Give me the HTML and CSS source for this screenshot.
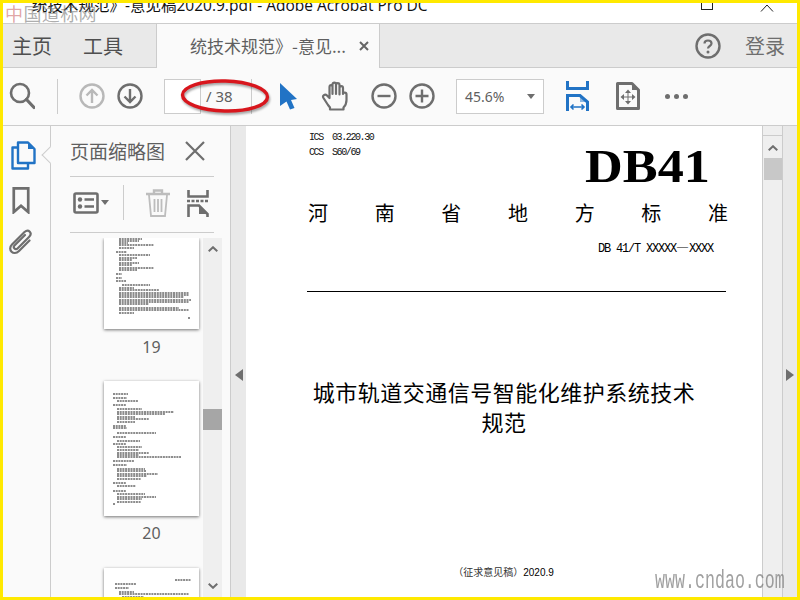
FILE: index.html
```html
<!DOCTYPE html>
<html lang="zh">
<head>
<meta charset="utf-8">
<title>Adobe Acrobat Pro DC</title>
<link rel="stylesheet" href="styles.css">
</head>
<body>
<div class="frame">
  <header class="titlebar">
    <span class="title-text">统技术规范》-意见稿2020.9.pdf - Adobe Acrobat Pro DC</span>
    <span class="win-max"></span>
    <svg class="win-up" width="14" height="8" viewBox="0 0 14 8"><path d="M1 7.500 L7 1 L13 7.500" fill="none" stroke="#222" stroke-width="1"/></svg>
  </header>
  <nav class="tabbar">
    <span class="nav-item first">主页</span>
    <span class="nav-item">工具</span>
    <div class="doc-tab">
      <span class="doc-tab-text">统技术规范》-意见...</span>
      <svg width="10" height="10" viewBox="0 0 10 10"><path d="M1 1 L9 9 M9 1 L1 9" stroke="#666" stroke-width="2"/></svg>
    </div>
    <div class="tab-right">
      <svg width="26" height="26" viewBox="0 0 26 26"><circle cx="13" cy="13" r="11.500" fill="none" stroke="#6e6e6e" stroke-width="2.400"/><path d="M9.500 10.500 C9.500 6.500 16.500 6.500 16.500 10.500 C16.500 13 13 13 13 15.500" fill="none" stroke="#6e6e6e" stroke-width="2.200"/><circle cx="13" cy="19" r="1.500" fill="#6e6e6e"/></svg>
      <span class="login">登录</span>
    </div>
  </nav>
  <div class="toolbar">
    <svg class="ic-search" width="26" height="28" viewBox="0 0 26 28"><circle cx="11" cy="11" r="9" fill="none" stroke="#6e6e6e" stroke-width="2.600"/><path d="M17.500 17.500 L25 25.500" stroke="#6e6e6e" stroke-width="3.200" stroke-linecap="round"/></svg>
    <span class="tool-div first-div"></span>
    <svg class="ic-up" width="26" height="26" viewBox="0 0 26 26"><circle cx="13" cy="13" r="11.500" fill="none" stroke="#b8b8b8" stroke-width="2.400"/><path d="M13 20 V7 M7.500 12.500 L13 7 L18.500 12.500" fill="none" stroke="#b8b8b8" stroke-width="2.400"/></svg>
    <svg class="ic-down" width="26" height="26" viewBox="0 0 26 26"><circle cx="13" cy="13" r="11.500" fill="none" stroke="#6e6e6e" stroke-width="2.400"/><path d="M13 6 V19 M7.500 13.500 L13 19 L18.500 13.500" fill="none" stroke="#6e6e6e" stroke-width="2.400"/></svg>
    <span class="page-input"></span>
    <span class="page-total">/ 38</span>
    <span class="tool-div second-div"></span>
    <svg class="ic-cursor" width="19" height="28" viewBox="0 0 19 28"><path d="M1 1 L18 17 L12 18 L15.500 26 L11 27.500 L7.500 19.500 L1 24 Z" fill="#2173c5"/></svg>
    <svg class="ic-hand" width="30" height="30" viewBox="0 0 30 30"><path d="M7 24 L2.500 17 C1 14.500 4 12.500 6 14.500 L8.500 17 V6 C8.500 3.500 11.500 3.500 11.500 6 V13 V3.500 C11.500 1 15 1 15 3.500 V13 V4 C15 1.500 18.500 1.500 18.500 4 V13.500 V7 C18.500 4.500 22 4.500 22 7 V13 C22 11 25.500 11 25.500 13.500 V19 C25.500 23 24 25 22.500 26.500 V28.500 H9 V26.500 Z" fill="none" stroke="#6e6e6e" stroke-width="2.200" stroke-linejoin="round"/></svg>
    <svg class="ic-minus" width="26" height="26" viewBox="0 0 26 26"><circle cx="13" cy="13" r="11.500" fill="none" stroke="#6e6e6e" stroke-width="2.400"/><path d="M6.500 13 H19.500" stroke="#6e6e6e" stroke-width="2.400"/></svg>
    <svg class="ic-plus" width="26" height="26" viewBox="0 0 26 26"><circle cx="13" cy="13" r="11.500" fill="none" stroke="#6e6e6e" stroke-width="2.400"/><path d="M6.500 13 H19.500 M13 6.500 V19.500" stroke="#6e6e6e" stroke-width="2.400"/></svg>
    <div class="zoom-box"><span>45.6%</span><i class="caret"></i></div>
    <svg class="ic-fit" width="23" height="31" viewBox="0 0 23 31"><path d="M1.500 0 V7.500 H21.500 V0" fill="none" stroke="#2173c5" stroke-width="3"/><path d="M1.500 30 V14.500 H14 L21.500 21 V30" fill="none" stroke="#2173c5" stroke-width="3"/><path d="M14 14.500 V21 H21.500" fill="#2173c5" opacity=".5"/><path d="M5 26 H18 M7.500 23.500 L5 26 L7.500 28.500 M15.500 23.500 L18 26 L15.500 28.500" fill="none" stroke="#2173c5" stroke-width="1.600"/></svg>
    <svg class="ic-move" width="24" height="28" viewBox="0 0 24 28"><path d="M1.500 1.500 H16 L22.500 8 V26.500 H1.500 Z" fill="none" stroke="#6e6e6e" stroke-width="3" stroke-linejoin="round"/><path d="M16 1.500 V8 H22.500" fill="#6e6e6e"/><path d="M12 7.500 L15 11 H9 Z M12 22.500 L15 19 H9 Z M4.500 15 L8 12 V18 Z M19.500 15 L16 12 V18 Z" fill="#6e6e6e"/><path d="M12 10 V20 M7 15 H17" stroke="#6e6e6e" stroke-width="1"/></svg>
    <div class="dots"><i></i><i></i><i></i></div>
  </div>
  <main class="workspace">
    <aside class="rail">
      <svg class="rail-pages" width="25" height="29" viewBox="0 0 25 29"><path d="M7 1.500 H17 L23.500 8 V22 H7 Z" fill="none" stroke="#2173c5" stroke-width="2.400" stroke-linejoin="round"/><path d="M17 1.500 V8 H23.500" fill="#2173c5"/><path d="M7 6.500 H1.500 V27.500 H17 V22" fill="none" stroke="#2173c5" stroke-width="2.400" stroke-linejoin="round"/></svg>
      <svg class="rail-mark" width="18" height="27" viewBox="0 0 18 28"><path d="M1.500 1.500 H16.500 V26 L9 19.500 L1.500 26 Z" fill="none" stroke="#6e6e6e" stroke-width="2.800"/></svg>
      <svg class="rail-clip" width="26" height="27" viewBox="0 0 26 27"><path d="M17 6 L6.500 16.500 C4.500 18.500 7.500 21.500 9.500 19.500 L21 8 C25 4 20.500 -0.500 16.500 3 L4 15.500 C-1 20.500 5.500 27.500 11 22 L21.500 11.500" fill="none" stroke="#6e6e6e" stroke-width="2.200" stroke-linecap="round"/></svg>
    </aside>
    <section class="panel">
      <span class="notch"></span>
      <div class="panel-head">
        <span class="panel-title">页面缩略图</span>
        <svg class="panel-close" width="20" height="20" viewBox="0 0 20 20"><path d="M1 1 L19 19 M19 1 L1 19" stroke="#6e6e6e" stroke-width="2.200"/></svg>
      </div>
      <div class="panel-tools">
        <svg class="ic-list" width="26" height="22" viewBox="0 0 26 22"><rect x="1.500" y="1.500" width="23" height="19" rx="1.500" fill="none" stroke="#6e6e6e" stroke-width="2.600"/><circle cx="7" cy="7.500" r="2.200" fill="#6e6e6e"/><circle cx="7" cy="14.500" r="2.200" fill="#6e6e6e"/><path d="M11.500 7.500 H21 M11.500 14.500 H21" stroke="#6e6e6e" stroke-width="2.400"/></svg>
        <i class="caret small"></i>
        <span class="tool-div panel-div"></span>
        <svg class="ic-trash" width="26" height="28" viewBox="0 0 26 28"><path d="M1 5 H25 M9 5 V1.500 H17 V5" fill="none" stroke="#bdbdbd" stroke-width="2.400"/><path d="M4 6 L6 27 H20 L22 6 M9.500 10 V23 M13 10 V23 M16.500 10 V23" fill="none" stroke="#bdbdbd" stroke-width="1.800"/></svg>
        <svg class="ic-fit2" width="22" height="27" viewBox="0 0 22 27"><path d="M1.500 0 V6.500 H20.500 V0" fill="none" stroke="#6e6e6e" stroke-width="2.600"/><path d="M0 11 H22" stroke="#6e6e6e" stroke-width="2.400" stroke-dasharray="3 1.500"/><path d="M1.500 27 V15.500 H12 L20.500 24 V27" fill="none" stroke="#6e6e6e" stroke-width="2.600"/><path d="M12 15.500 V24 H20.500 Z" fill="#6e6e6e"/></svg>
      </div>
      <div class="thumbs-wrap">
        <div class="thumbs">
          <div class="thumb thumb-19">
            <svg width="95" height="91" viewBox="0 0 95 91"><path class="ink" d="M15 1 H38 M15 3 H35 M15 5 H24 M15 7 H50 M15 10 H30 M12 14 H23 M15 17 H46 M15 20 H33 M15 22 H28 M15 25 H35 M15 27 H28 M15 30 H50 M15 32 H33 M12 36 H18 M12 40 H18 M12 43 H22 M18 47 H46 M15 50 H30 M15 52 H55 M15 55 H85 M15 57 H85 M15 59 H80 M15 62 H87 M15 64 H85 M15 66 H45 M15 70 H75 M15 72 H85 M15 75 H30 M84 80 H86"/></svg>
          </div>
          <div class="thumb-num num-19">19</div>
          <div class="thumb thumb-20">
            <svg width="95" height="135" viewBox="0 0 95 135"><path class="ink" d="M9 13 H24 M9 17 H23 M13 20 H34 M9 24 H22 M13 28 H38 M13 31 H70 M13 33 H61 M13 36 H31 M13 38 H45 M13 41 H31 M9 45 H22 M9 47 H23 M13 52 H52 M9 56 H22 M13 60 H36 M9 63 H22 M13 66 H38 M13 69 H35 M13 72 H45 M13 74 H35 M13 76 H77 M9 80 H30 M9 84 H23 M13 88 H41 M13 90 H42 M13 93 H54 M13 95 H43 M13 98 H37 M9 102 H22 M13 105 H32 M9 110 H22 M13 113 H41 M13 116 H52 M13 118 H38 M13 121 H37 M9 123 H11"/></svg>
          </div>
          <div class="thumb-num num-20">20</div>
          <div class="thumb thumb-21">
            <svg width="95" height="135" viewBox="0 0 95 135"><path class="ink" d="M71 12 H87 M11 16 H32 M11 20 H25 M15 24 H30 M15 26 H85 M18 29 H40"/></svg>
          </div>
        </div>
        <div class="thumb-scroll">
          <svg class="chev-up" width="10" height="6" viewBox="0 0 14 8"><path d="M1 7 L7 1.500 L13 7" fill="none" stroke="#6e6e6e" stroke-width="2.800"/></svg>
          <span class="thumb-scroll-bar"></span>
          <svg class="chev-down" width="10" height="6" viewBox="0 0 14 8"><path d="M1 1 L7 6.500 L13 1" fill="none" stroke="#6e6e6e" stroke-width="2.800"/></svg>
        </div>
      </div>
    </section>
    <div class="gutter"><i class="tri-left"></i></div>
    <article class="page">
      <div class="doc-head">
        <div class="doc-meta">
          <div class="doc-meta-line">ICS  03.220.30</div>
          <div class="doc-meta-line">CCS  S60/69</div>
        </div>
        <div class="doc-code">DB41</div>
      </div>
      <div class="doc-org"><span>河</span><span>南</span><span>省</span><span>地</span><span>方</span><span>标</span><span>准</span></div>
      <div class="doc-no">DB 41/T XXXXX<span class="dash">—</span>XXXX</div>
      <div class="doc-rule"></div>
      <h1 class="doc-title">城市轨道交通信号智能化维护系统技术<br>规范</h1>
      <div class="doc-foot">（征求意见稿）<span class="doc-date">2020.9</span></div>
    </article>
    <div class="doc-scroll">
      <span class="doc-scroll-stub"></span>
      <svg class="doc-chev" width="10" height="6" viewBox="0 0 14 8"><path d="M1 7 L7 1.500 L13 7" fill="none" stroke="#6e6e6e" stroke-width="2.800"/></svg>
      <span class="doc-scroll-bar"></span>
    </div>
    <div class="gutter right"><i class="tri-right"></i></div>
  </main>
  <span class="wm-cn"><b>中</b>国道标网</span>
  <span class="wm-url">www.cndao.com</span>
  <svg class="annot" width="100" height="42" viewBox="0 0 100 42"><ellipse cx="49" cy="19" rx="42.500" ry="15" fill="none" stroke="#d8161d" stroke-width="3.400" transform="rotate(1.500 49 19)"/></svg>
</div>
</body>
</html>
```
FILE: styles.css
```css
* { box-sizing: border-box; }
html, body { margin: 0; padding: 0; }
body { width: 800px; height: 600px; overflow: hidden; font-family: "Noto Sans", "Noto Sans CJK SC", sans-serif; }
svg { display: block; flex: none; }
.frame { position: relative; width: 800px; height: 600px; border: 3px solid #ffe900; display: flex; flex-direction: column; background: #fafafa; overflow: hidden; }

/* title bar */
.titlebar { height: 21px; flex: none; display: flex; align-items: flex-start; background: #fff; border-bottom: 1px solid #ccc; overflow: hidden; }
.title-text { margin: -8px 0 0 29px; font-size: 15.500px; line-height: 20px; color: #111; white-space: nowrap; font-family: "Open Sans", "Noto Sans CJK SC", sans-serif; }
.win-max { margin-left: auto; width: 12px; height: 7px; border: 1px solid #222; border-top: 0; }
.win-up { margin: 1px 23px 0 47px; }

/* tab bar */
.tabbar { height: 44px; flex: none; display: flex; align-items: center; background: #e9e9e9; border-bottom: 1px solid #ccc; }
.nav-item { margin-left: 31px; font-size: 20px; color: #4f4f4f; font-family: "Noto Sans CJK SC", sans-serif; }
.nav-item.first { margin-left: 9px; }
.doc-tab { margin-left: 33px; width: 224px; height: 44px; display: flex; align-items: center; padding-left: 33px; background: #fafafa; border-left: 1px solid #ccc; border-right: 1px solid #ccc; color: #5f5f5f; }
.doc-tab-text { width: 169px; font-size: 17px; font-family: "Noto Sans CJK SC", sans-serif; white-space: nowrap; }
.tab-right { margin-left: auto; display: flex; align-items: center; padding-right: 12px; }
.login { margin-left: 24px; font-size: 20px; color: #6e6e6e; font-family: "Noto Sans CJK SC", sans-serif; }

/* tool bar */
.toolbar { height: 58px; flex: none; display: flex; align-items: center; padding-bottom: 1px; background: #fafafa; border-bottom: 1px solid #ccc; }
.tool-div { flex: none; width: 1px; height: 35px; background: #ccc; }
.ic-search { margin-left: 6px; }
.first-div { margin-left: 22px; }
.ic-up { margin-left: 21px; }
.ic-down { margin-left: 12px; }
.page-input { margin-left: 21px; width: 37px; height: 35px; background: #fff; border: 1px solid #ccc; }
.page-total { margin-left: 5px; width: 45px; font-size: 15px; color: #5f5f5f; }
.ic-cursor { margin-left: 27px; }
.ic-hand { margin-left: 23px; }
.ic-minus { margin-left: 20px; }
.ic-plus { margin-left: 12px; }
.zoom-box { margin-left: 21px; width: 88px; height: 35px; display: flex; align-items: center; justify-content: space-between; padding: 0 8px 0 8px; background: #fff; border: 1px solid #ccc; font-size: 14px; color: #5f5f5f; }
.caret { display: block; flex: none; width: 0; height: 0; border-left: 4px solid transparent; border-right: 4px solid transparent; border-top: 5px solid #6e6e6e; }
.ic-fit { margin-left: 22px; }
.ic-move { margin-left: 27px; }
.dots { margin-left: 25px; display: flex; gap: 4px; }
.dots i { display: block; width: 5px; height: 5px; border-radius: 50%; background: #6e6e6e; }

/* workspace */
.workspace { flex: 1; min-height: 0; display: flex; }
.rail { width: 48px; flex: none; display: flex; flex-direction: column; padding: 15px 0 0 8px; background: #fafafa; border-right: 1px solid #ccc; }
.rail-mark { margin: 17px 0 0 1px; }
.rail-clip { margin: 15px 0 0 -3px; }
.panel { position: relative; width: 180px; flex: none; display: flex; flex-direction: column; padding-left: 19px; background: #fafafa; border-right: 1px solid #ccc; }
.notch { position: absolute; left: -7px; top: 23px; width: 12px; height: 12px; background: #fafafa; border-left: 1px solid #ccc; border-bottom: 1px solid #ccc; transform: rotate(45deg); }
.panel-head { width: 144px; height: 51px; flex: none; display: flex; align-items: center; border-bottom: 1px solid #ccc; }
.panel-title { width: 95px; font-size: 19px; line-height: 26px; padding-bottom: 1px; color: #5f5f5f; white-space: nowrap; font-family: "Noto Sans CJK SC", sans-serif; }
.panel-close { margin-left: 20px; }
.panel-tools { width: 144px; height: 56px; flex: none; display: flex; align-items: center; padding-bottom: 4px; border-bottom: 1px solid #ccc; }
.ic-list { margin-left: 3px; }
.caret.small { margin-left: 2px; }
.panel-div { margin-left: 14px; }
.ic-trash { margin-left: 21px; }
.ic-fit2 { margin: 2px 0 0 16px; }

.thumbs-wrap { flex: 1; min-height: 0; display: flex; padding-top: 5px; }
.thumbs { width: 133px; padding-left: 34px; overflow: hidden; }
.thumb { width: 95px; background: #fff; box-shadow: 0 1px 3px rgba(0, 0, 0, .55); }
.thumb-19 { height: 91px; }
.thumb-20 { height: 135px; margin-top: 24px; }
.thumb-21 { height: 135px; margin-top: 25px; }
.ink { fill: none; stroke: #1a1a1a; stroke-width: 1; stroke-dasharray: 2 .7; }
.thumb-num { width: 95px; height: 20px; line-height: 20px; text-align: center; font-size: 16px; color: #5f5f5f; }
.num-19 { margin-top: 8px; }
.num-20 { margin-top: 7px; }
.thumb-scroll { width: 19px; flex: none; display: flex; flex-direction: column; align-items: center; background: #efefef; }
.chev-up { margin-top: 8px; }
.thumb-scroll-bar { flex: none; margin-top: 157px; width: 19px; height: 21px; background: #a6a6a6; }
.chev-down { margin-top: 153px; }

.gutter { width: 15px; flex: none; display: flex; align-items: center; justify-content: center; padding-top: 26px; background: #e9e9e9; }
.tri-left { display: block; width: 0; height: 0; border-top: 6px solid transparent; border-bottom: 6px solid transparent; border-right: 8px solid #6e6e6e; }
.tri-right { display: block; width: 0; height: 0; border-top: 6px solid transparent; border-bottom: 6px solid transparent; border-left: 8px solid #6e6e6e; }

/* document page */
.page { width: 516px; flex: none; background: #fff; color: #000; padding-top: 4px; font-family: "Noto Sans CJK SC", sans-serif; overflow: hidden; }
.doc-head { display: flex; justify-content: space-between; padding: 0 52px 0 63px; }
.doc-meta { font-family: "Liberation Mono", monospace; font-size: 10px; letter-spacing: -1.400px; line-height: 15px; color: #111; }
.doc-meta-line { white-space: pre; }
.doc-code { margin-top: 15px; font-family: "Liberation Serif", serif; font-weight: 700; font-size: 46px; line-height: 44px; transform: scaleX(1.136); transform-origin: right center; }
.doc-org { margin: 12px 0 0 62px; width: 420px; display: flex; justify-content: space-between; font-size: 20px; line-height: 24px; }
.doc-no { margin: 16px 0 0 352px; height: 12px; font-family: "Liberation Mono", monospace; font-size: 12px; letter-spacing: -1.200px; line-height: 12px; white-space: nowrap; }
.dash { font-family: "Noto Sans CJK SC", sans-serif; font-size: 13px; line-height: 12px; letter-spacing: 0; }
.doc-rule { margin: 38px 0 0 61px; width: 419px; height: 1px; background: #000; }
.doc-title { margin: 84px 0 0; font-size: 22px; font-weight: 400; line-height: 30px; letter-spacing: .5px; text-align: center; }
.doc-foot { margin-top: 129px; padding-right: 1px; font-size: 10px; line-height: 14px; text-align: center; color: #333; }
.doc-date { color: #000; font-family: "Liberation Sans", sans-serif; }

.doc-scroll { width: 21px; flex: none; display: flex; flex-direction: column; align-items: center; background: #efefef; border-left: 1px solid #ccc; border-right: 1px solid #ccc; }
.doc-scroll-stub { width: 100%; height: 10px; flex: none; border-bottom: 1px solid #ccc; }
.doc-chev { margin-top: 9px; }
.doc-scroll-bar { flex: none; margin-top: 7px; width: 18px; height: 22px; background: #c8c8c8; }
.gutter.right { flex: 1; }

/* overlays: watermark and hand-drawn annotation */
.wm-cn { position: absolute; left: 2px; top: -2px; font-size: 18px; line-height: 24px; letter-spacing: .4px; color: rgba(120, 120, 120, .6); font-family: "Noto Sans CJK SC", sans-serif; white-space: nowrap; }
.wm-cn b { font-weight: 400; color: rgba(200, 90, 90, .55); }
.wm-url { position: absolute; left: 652px; top: 566px; font-family: "Liberation Mono", monospace; font-size: 26px; line-height: 24px; color: rgba(120, 120, 120, .7); white-space: nowrap; transform: scaleX(.64); transform-origin: left center; }
.annot { position: absolute; left: 173px; top: 74px; filter: drop-shadow(1px 2px 1px rgba(0, 0, 0, .35)); }
```
